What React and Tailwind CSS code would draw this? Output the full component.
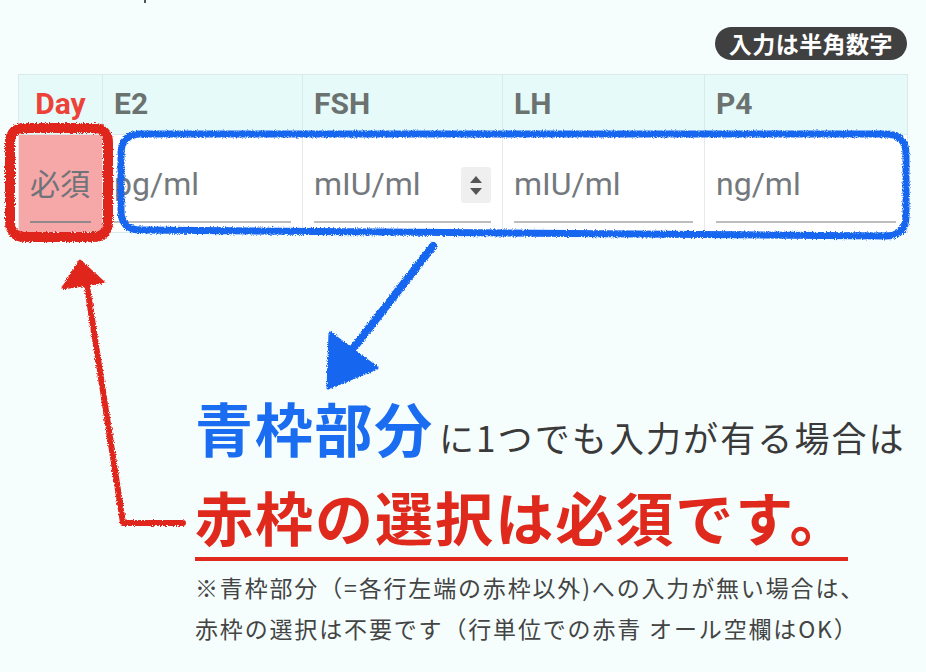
import React from "react";

const jp = "font-[Noto_Sans_CJK_JP,sans-serif]";

function Spinner() {
  return (
    <div className="w-[30px] h-[36px] bg-[#efefef] rounded-[3px] flex flex-col items-center justify-center gap-[5px] mb-[18px] shrink-0">
      <div className="w-0 h-0 border-l-[6px] border-r-[6px] border-b-[7px] border-l-transparent border-r-transparent border-b-[#555]" />
      <div className="w-0 h-0 border-l-[6px] border-r-[6px] border-t-[7px] border-l-transparent border-r-transparent border-t-[#555]" />
    </div>
  );
}

function InputCell({ placeholder, spinner, last }) {
  return (
    <div className={`h-[97px] bg-white px-[11px] pb-[9px] flex flex-col justify-end ${last ? "" : "border-r border-[#e5eae9]"}`}>
      <div className="h-[64px] border-b-2 border-[#bdbdbd] flex items-end">
        <input
          type="text"
          placeholder={placeholder}
          className="flex-1 min-w-0 h-[64px] pt-0 pb-[10px] bg-transparent outline-none font-[Roboto,sans-serif] text-[32px] leading-none text-[#333] placeholder:text-[#74797d]"
        />
        {spinner && <Spinner />}
      </div>
    </div>
  );
}

export default function App() {
  const headers = ["E2", "FSH", "LH", "P4"];
  const placeholders = ["pg/ml", "mIU/ml", "mIU/ml", "ng/ml"];
  return (
    <div className={`relative w-[926px] h-[672px] overflow-hidden bg-[#f5fefd] ${jp}`}>
      {/* cut-off mark at top */}
      <div className="h-[27px]">
        <div className="ml-[144px] w-[2px] h-[3px] bg-[#555]" />
      </div>

      {/* badge */}
      <div className="flex justify-end pr-[19px]">
        <div className="h-[33px] px-[14px] rounded-full bg-[#404040] text-white text-[23px] font-bold leading-none flex items-center tracking-[0.02em]">
          入力は半角数字
        </div>
      </div>

      {/* table */}
      <div className="mt-[14px] ml-[18px] w-[890px] border border-[#d9ebe8]">
        <div className="grid grid-cols-[84px_200px_200px_202px_202px] bg-[#e6fbf9] border-b border-[#d9ebe8] h-[60px]">
          <div className="border-r border-[#d9ebe8] pt-[14px] text-center font-[Roboto,sans-serif] font-bold text-[30px] leading-none text-[#ec4239]">
            Day
          </div>
          {headers.map((h, i) => (
            <div
              key={h}
              className={`pt-[14px] pl-[11px] font-[Roboto,sans-serif] font-bold text-[30px] leading-none text-[#6b7371] ${i < 3 ? "border-r border-[#d9ebe8]" : ""}`}
            >
              {h}
            </div>
          ))}
        </div>
        <div className="grid grid-cols-[84px_200px_200px_202px_202px]">
          <div className="h-[97px] bg-[#f6a7a8] px-[11px] pb-[9px] flex flex-col justify-end border-r border-[#e5eae9]">
            <div className="h-[64px] border-b-2 border-[#8f8b8c] flex items-end">
              <span className="pb-[24px] text-[30px] leading-none text-[#6f7479]">必須</span>
            </div>
          </div>
          {placeholders.map((p, i) => (
            <InputCell key={i} placeholder={p} spinner={i === 1} last={i === 3} />
          ))}
        </div>
      </div>

      {/* explanation text */}
      <div className="ml-[195px] mt-[165px] w-[653px]">
        <div className="flex items-baseline whitespace-nowrap">
          <span className="shrink-0 text-[58px] font-bold leading-none tracking-[0.03em] text-[#1a6cf0]">青枠部分</span>
          <span className="shrink-0 ml-[5px] text-[35px] leading-none tracking-[0.06em] text-[#3a3a3a]">に1つでも入力が有る場合は</span>
        </div>
        <div className="mt-[31px] pb-[11px] border-b-4 border-[#e0291d] whitespace-nowrap">
          <span className="text-[58px] font-bold leading-none tracking-[0.035em] text-[#e0291d]">赤枠の選択は必須です。</span>
        </div>
        <div className="mt-[6px] text-[23px] leading-[41px] tracking-[0.08em] text-[#444] whitespace-nowrap">
          <div>※青枠部分（=各行左端の赤枠以外)への入力が無い場合は、</div>
          <div>赤枠の選択は不要です（行単位での赤青 オール空欄はOK）</div>
        </div>
      </div>

      {/* hand-drawn annotations */}
      <svg className="absolute inset-0 pointer-events-none" width="926" height="672" viewBox="0 0 926 672">
        <defs>
          <filter id="crayon" x="-5%" y="-5%" width="110%" height="110%">
            <feTurbulence type="fractalNoise" baseFrequency="0.9" numOctaves="2" seed="3" result="noise" />
            <feDisplacementMap in="SourceGraphic" in2="noise" scale="4" xChannelSelector="R" yChannelSelector="G" />
          </filter>
        </defs>
        <g filter="url(#crayon)" fill="none" strokeLinecap="round" strokeLinejoin="round">
          <path
            d="M 141 134 L 885 134 Q 906 134 906 154 L 906 216 Q 906 236 885 236 L 141 230 Q 121 230 121 210 L 121 154 Q 121 134 141 134 Z"
            stroke="#1566f0"
            strokeWidth="7"
          />
          <path
            d="M 25 128 L 93 128 Q 108 128 108 143 L 108 221 Q 108 237 93 237 L 25 237 Q 10 237 10 221 L 10 143 Q 10 128 25 128 Z"
            stroke="#e0261a"
            strokeWidth="10"
          />
          <path d="M 433 246 L 352 350" stroke="#1566f0" strokeWidth="8" />
          <polygon points="330,333 377,368 328,388" fill="#1566f0" stroke="#1566f0" strokeWidth="3" />
          <path d="M 183 523 L 123 523 L 87 286" stroke="#e0261a" strokeWidth="6" />
          <polygon points="80,261 63,288 103,282" fill="#e0261a" stroke="#e0261a" strokeWidth="3" />
        </g>
      </svg>
    </div>
  );
}
